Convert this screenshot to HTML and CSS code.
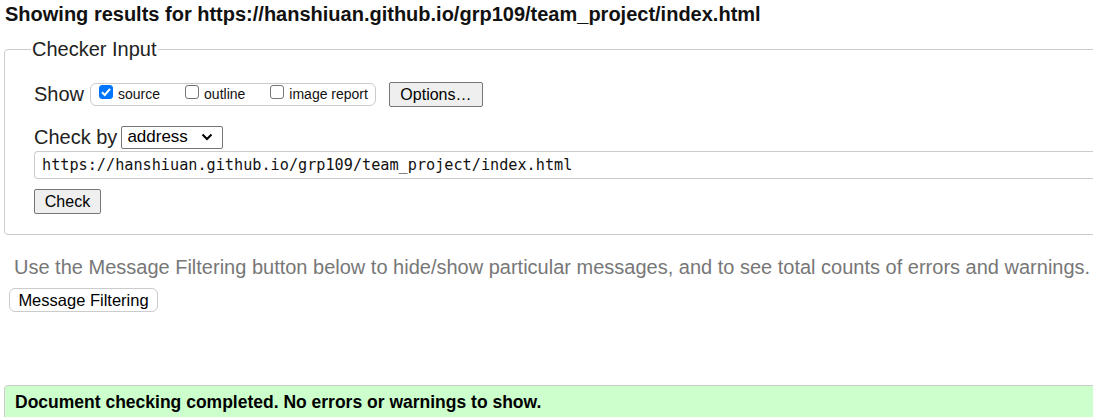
FILE: index.html
```html
<!DOCTYPE html>
<html>
<head>
<meta charset="utf-8">
<link rel="stylesheet" href="styles.css">
</head>
<body>
<h2 class="title">Showing results for https://hanshiuan.github.io/grp109/team_project/index.html</h2>
<fieldset class="checker">
  <legend class="legend">Checker Input</legend>
  <div class="row show-row">
    <span class="label">Show</span>
    <span class="show-box">
      <label class="opt"><span class="cb cb-on"><svg viewBox="0 0 14 14" width="14" height="14"><path d="M3 7.2 L5.8 10 L11 3.8" fill="none" stroke="#fff" stroke-width="2"/></svg></span>source</label>
      <label class="opt"><span class="cb"></span>outline</label>
      <label class="opt"><span class="cb"></span>image report</label>
    </span>
    <button class="btn options">Options…</button>
  </div>
  <div class="row by-row">
    <span class="label">Check by</span>
    <span class="select">address<svg class="chev" viewBox="0 0 12 8" width="12" height="8"><path d="M1.5 1.5 L6 6 L10.5 1.5" fill="none" stroke="#000" stroke-width="2"/></svg></span>
  </div>
  <div class="url">https://hanshiuan.github.io/grp109/team_project/index.html</div>
  <button class="btn check">Check</button>
</fieldset>
<p class="note">Use the Message Filtering button below to hide/show particular messages, and to see total counts of errors and warnings.</p>
<button class="filter">Message Filtering</button>
<div class="success">Document checking completed. No errors or warnings to show.</div>
</body>
</html>
```

FILE: styles.css
```css
html, body {
  margin: 0;
  padding: 0;
  overflow: hidden;
  background: #fff;
}
body {
  font-family: "Liberation Sans", Arial, sans-serif;
  color: #222;
  width: 1093px;
  height: 417px;
  position: relative;
}
.title {
  font-size: 20px;
  font-weight: bold;
  margin: 0;
  padding: 2px 0 0 5px;
  line-height: 24px;
  color: #111;
  white-space: nowrap;
}
.checker {
  margin: 12px 0 0 4px;
  width: 1120px;
  border: 1px solid #ccc;
  border-radius: 4px;
  padding: 10px 0 20px 29px;
  box-sizing: border-box;
}
.legend {
  font-size: 20px;
  padding: 0 1px;
  margin-left: -3px;
  color: #222;
}
.row {
  display: flex;
  align-items: center;
}
.label {
  font-size: 20px;
  color: #222;
}
.show-row {
  height: 26px;
  margin-top: 10px;
}
.show-box {
  display: flex;
  align-items: center;
  margin-left: 6px;
  height: 23px;
  box-sizing: border-box;
  border: 1px solid #ccc;
  border-radius: 6px;
  padding: 0 7px 0 8px;
  font-size: 14px;
  color: #111;
}
.opt {
  display: flex;
  align-items: center;
  margin-right: 25px;
}
.opt:last-child { margin-right: 0; }
.cb {
  width: 14px;
  height: 14px;
  border: 1px solid #767676;
  border-radius: 3px;
  margin: -5px 5px 0 0;
  box-sizing: border-box;
  display: inline-block;
  background: #fff;
}
.cb-on {
  background: #0075ff;
  border-color: #0075ff;
  position: relative;
}
.cb-on svg {
  position: absolute;
  left: -1px;
  top: -1px;
  width: 14px;
  height: 14px;
}
.btn {
  font-family: "Liberation Sans", Arial, sans-serif;
  font-size: 16px;
  background: #efefef;
  border: 1px solid #767676;
  border-radius: 2px;
  color: #000;
  padding: 0 8px;
  height: 25px;
  line-height: 23px;
}
.options {
  margin-left: 13px;
  width: 94px;
}
.by-row {
  margin-top: 18px;
  height: 24px;
}
.select {
  margin-left: 4px;
  width: 102px;
  height: 23px;
  border: 1px solid #767676;
  border-radius: 2px;
  box-sizing: border-box;
  font-size: 17px;
  color: #000;
  display: flex;
  align-items: center;
  justify-content: space-between;
  padding: 0 9px 0 5px;
}
.url {
  margin-top: 2px;
  height: 28px;
  box-sizing: border-box;
  border: 1px solid #ccc;
  border-right: none;
  border-radius: 4px 0 0 4px;
  font-family: "DejaVu Sans Mono", "Liberation Mono", monospace;
  font-size: 15.2px;
  line-height: 26px;
  padding-left: 7px;
  color: #111;
}
.check {
  margin-top: 10px;
  width: 67px;
  display: block;
  padding: 0;
}
.note {
  margin: 20px 0 0 14px;
  font-size: 20px;
  line-height: 24px;
  color: #777;
  white-space: nowrap;
}
.filter {
  display: block;
  margin: 9px 0 0 9px;
  height: 24px;
  width: 149px;
  padding: 0;
  border: 1px solid #ccc;
  border-radius: 6px;
  background: #fff;
  font-family: "Liberation Sans", Arial, sans-serif;
  font-size: 16.5px;
  color: #000;
}
.success {
  margin: 73px 0 0 4px;
  width: 1120px;
  height: 40px;
  box-sizing: border-box;
  background: #ccffcc;
  border: 1px solid #ccc;
  border-radius: 4px;
  padding: 6px 0 0 10px;
  font-size: 17.5px;
  font-weight: bold;
  color: #000;
}
```
